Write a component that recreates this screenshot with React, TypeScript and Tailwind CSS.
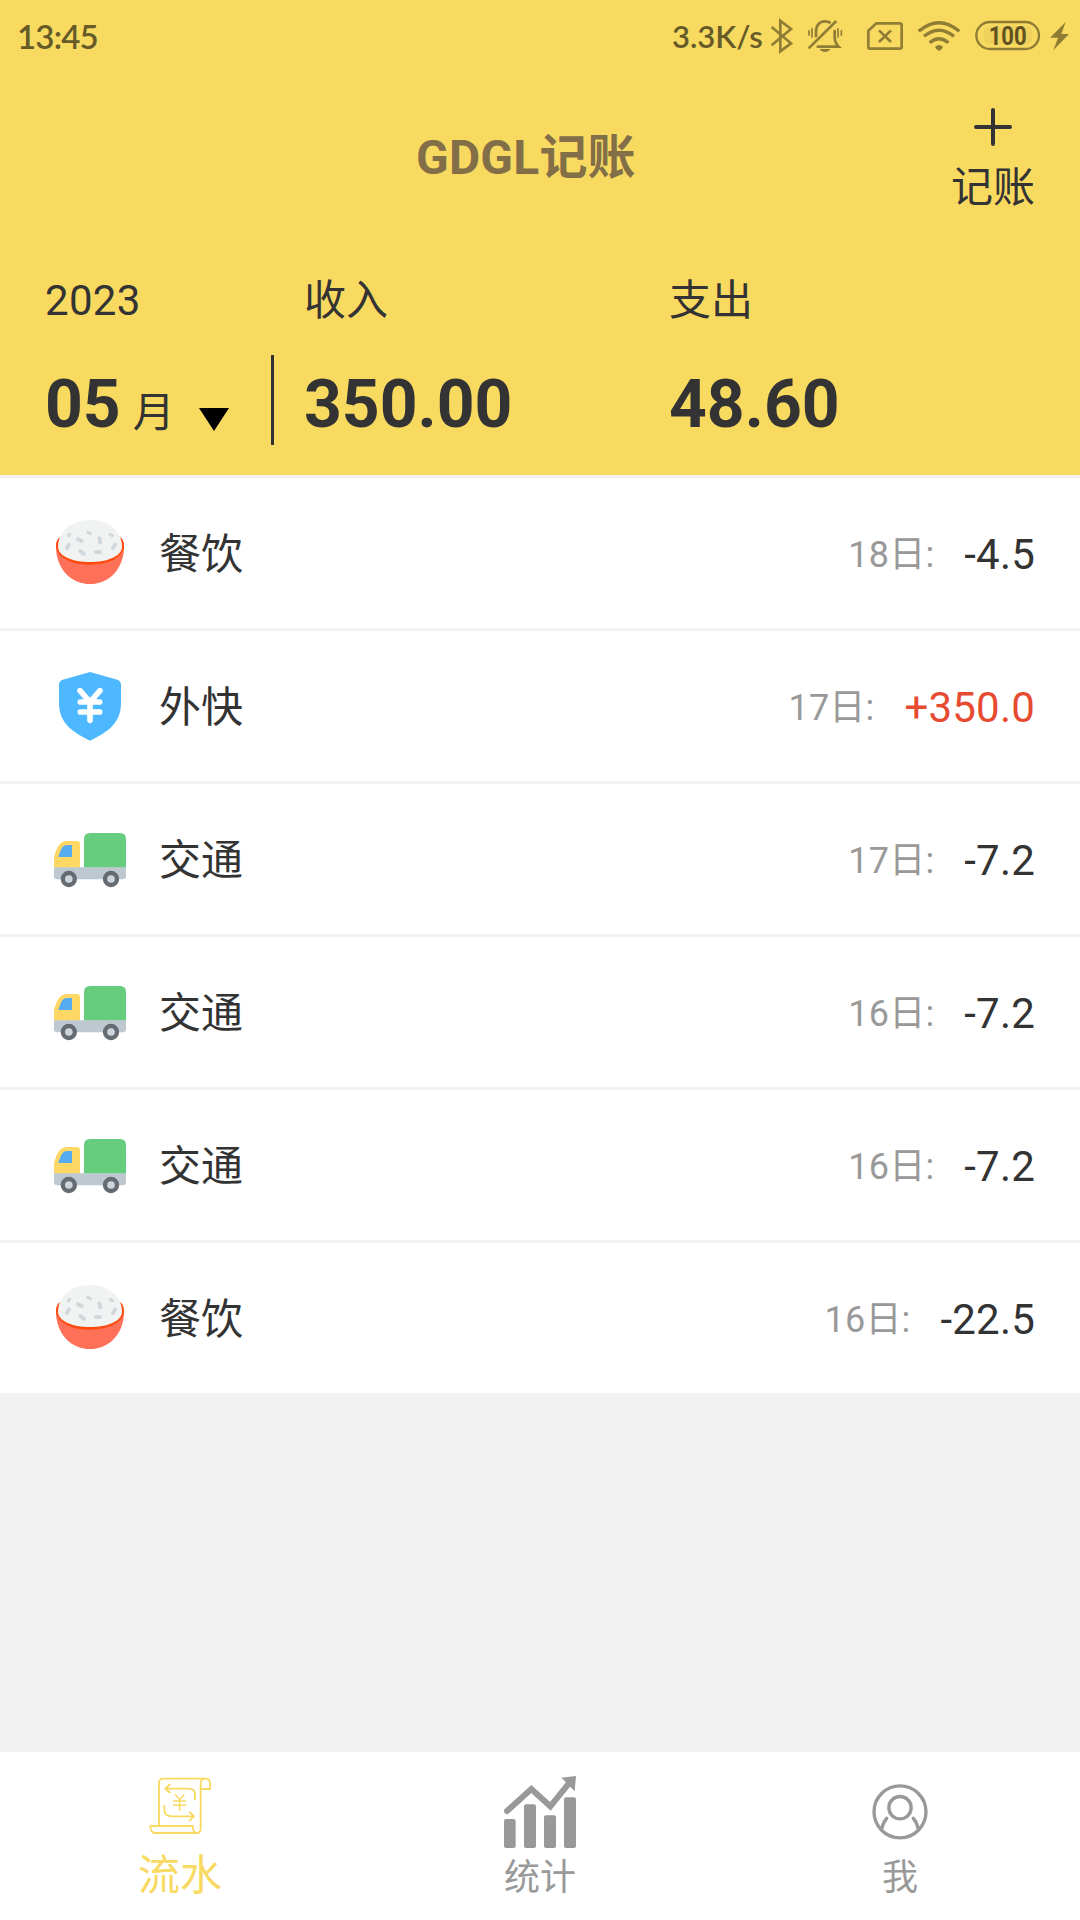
import React from "react";

type Kind = "food" | "bonus" | "traffic";

interface Entry {
  kind: Kind;
  name: string;
  day: string;
  amount: string;
}

const entries: Entry[] = [
  { kind: "food", name: "餐饮", day: "18日:", amount: "-4.5" },
  { kind: "bonus", name: "外快", day: "17日:", amount: "+350.0" },
  { kind: "traffic", name: "交通", day: "17日:", amount: "-7.2" },
  { kind: "traffic", name: "交通", day: "16日:", amount: "-7.2" },
  { kind: "traffic", name: "交通", day: "16日:", amount: "-7.2" },
  { kind: "food", name: "餐饮", day: "16日:", amount: "-22.5" },
];

function RiceIcon() {
  return (
    <svg className="size-[72px]" viewBox="72 51 216 216">
      <path d="M78 140C78 126 82 116 92 110H268C278 116 282 126 282 140C282 205 238 252 180 252C122 252 78 205 78 140Z" fill="#ff7058" />
      <path d="M78 140C78 126 82 116 92 110H268C278 116 282 126 282 142C276 176 232 194 180 194C128 194 84 176 78 140Z" fill="#ff4b10" />
      <path d="M84 140C84 96 124 60 180 60C236 60 276 96 276 140C276 168 232 186 180 186C128 186 84 168 84 140Z" fill="#f1f2f2" />
      <g stroke="#cfd8dd" strokeLinecap="round" fill="none">
        <path d="M144 118L155 123M208 115L211 127M151 153L161 161M198 156H210M117 134L111 144M255 134L249 144" strokeWidth="12" />
        <path d="M115 107L119 103M173 97L181 101M240 103L247 107" strokeWidth="9" />
      </g>
    </svg>
  );
}

function ShieldIcon() {
  return (
    <svg className="size-[72px]" viewBox="72 510 216 216">
      <path d="M180 516L262 539Q273 543 273 555V608C273 668 236 694 180 722C124 694 87 668 87 608V555Q87 543 98 539Z" fill="#4db8ff" />
      <path d="M150 572L180 606L210 572M151 606H209M151 636H209M180 606V661" stroke="#fff" strokeWidth="17" strokeLinecap="round" strokeLinejoin="round" fill="none" />
    </svg>
  );
}

function TruckIcon() {
  return (
    <svg className="size-[72px]" viewBox="72 69 216 216">
      <path d="M162 203V117Q162 99 180 99H270Q288 99 288 117V203Z" fill="#66cd7f" />
      <path d="M72 203V172C78 152 84 123 112 123H140Q150 123 150 133V203Z" fill="#ffd764" />
      <path d="M85 171C91 154 95 135 112 135H126V171Z" fill="#57abf1" />
      <path d="M72 202H288V228Q288 238 278 238H82Q72 238 72 228Z" fill="#bdc8d0" />
      <circle cx="116.500" cy="237" r="18" fill="#cdd6dd" stroke="#656b70" strokeWidth="13" />
      <circle cx="243" cy="237" r="18" fill="#cdd6dd" stroke="#656b70" strokeWidth="13" />
    </svg>
  );
}

const kindIcons: Record<Kind, () => React.JSX.Element> = {
  food: RiceIcon,
  bonus: ShieldIcon,
  traffic: TruckIcon,
};

function FlowIcon() {
  return (
    <svg className="size-[72px]" viewBox="132 108 216 216" fill="none" stroke="#f8da62" strokeWidth="5.500">
      <path d="M177 257V129Q177 116 190 116H316Q330 116 330 130V147H302V131Q302 116 316 116" />
      <path d="M302 147V264Q302 279 291 279Q278 279 278 258H151Q151 279 167 279H291" />
      <path d="M196 146H266Q285 146 285 165V180M211 132L196 146L211 159" />
      <path d="M193 195V207Q193 229 215 229H283M267 215L282 229L267 243" />
      <path d="M225 163L239 179L253 163M219 183H259M219 196H259M239 179V213" strokeWidth="4.500" />
    </svg>
  );
}

function ChartIcon() {
  return (
    <svg className="size-[72px]" viewBox="132 108 216 216" fill="#999">
      <rect x="132" y="237" width="35" height="87" rx="6" />
      <rect x="192" y="193" width="36" height="131" rx="6" />
      <rect x="252" y="226" width="36" height="98" rx="6" />
      <rect x="312" y="172" width="36" height="152" rx="6" />
      <path d="M141 213L214 147L271 199L326 131" fill="none" stroke="#999" strokeWidth="18" strokeLinecap="round" />
      <path d="M304 113L348 108L344 154Z" />
    </svg>
  );
}

function MeIcon() {
  return (
    <svg className="size-[72px]" viewBox="132 108 216 216" fill="none" stroke="#999" strokeWidth="10" strokeLinecap="round">
      <circle cx="240" cy="215.500" r="78" />
      <circle cx="240" cy="203" r="33.500" />
      <path d="M200 235C192 244 188 254 185 267M280 235C288 244 292 254 295 267" />
    </svg>
  );
}

function StatusBar() {
  return (
    <div className="flex h-[72px] items-center pl-[17px] text-[#655a28]">
      <span className="font-['Lato'] text-[33px] font-semibold leading-[40px] tracking-[-0.8px]">13:45</span>
      <span className="ml-auto w-[92px] whitespace-nowrap font-['Lato'] text-[31px] font-semibold leading-[40px]">3.3K/s</span>
      <svg className="h-[72px] w-[316px] shrink-0" viewBox="342 0 948 216" fill="none" stroke="#8f7d35" strokeWidth="8">
        <path d="M365 81L423 130L391 154V62L423 87L365 136" />
        <path d="M498 112V97C498 76 508 64 525 64Q534 64 542 69M554 90V112C554 124 558 132 566 140H500M476 145L559 63" />
        <path d="M477 91V107M486 85V113M564 85V113M574 91V107" strokeWidth="5" />
        <path d="M509 147H541Q537 156 525 156Q513 156 509 147Z" fill="#8f7d35" stroke="none" />
        <path d="M655 92L679 70H750Q755 70 755 75V141Q755 146 750 146H660Q655 146 655 141Z" />
        <path d="M687 91L723 126M723 91L687 126" />
        <path d="M806 94Q867 42 928 94" strokeWidth="10" />
        <path d="M822 109Q867 72 912 109" strokeWidth="10" />
        <path d="M839 128Q867 104 895 128" strokeWidth="10" />
        <path d="M855 140Q867 130 879 140Q878 146 867 153Q856 146 855 140Z" fill="#8f7d35" stroke="none" />
        <rect x="1001" y="79" width="146" height="54" rx="16" fill="#efd15d" stroke="none" />
        <rect x="979" y="66" width="188" height="81" rx="40.500" strokeWidth="7" />
        <path d="M1247 66L1200 113H1224L1210 151L1257 102H1234Z" fill="#8f7d35" stroke="none" />
        <text x="1073" y="135" textAnchor="middle" textLength="114" lengthAdjust="spacingAndGlyphs" fontFamily="Roboto" fontSize="78" fontWeight="700" fill="#5f5220" stroke="none">100</text>
      </svg>
    </div>
  );
}

function Header() {
  return (
    <header className="flex h-[475px] flex-col bg-[#f9da61]">
      <StatusBar />
      <div className="flex h-[168px] items-start pl-[416px] pr-[45px]">
        <h1 className="mt-[51px] text-[48px] font-bold leading-[70px] tracking-[0.2px] text-[#826f48]">GDGL记账</h1>
        <button className="ml-auto mt-[36px] flex flex-col items-center">
          <svg className="size-[38px]" viewBox="0 0 38 38" stroke="#333" strokeWidth="4" strokeLinecap="round">
            <path d="M2 19H36M19 2V36" />
          </svg>
          <span className="mt-[12px] text-[42px] leading-[60px]">记账</span>
        </button>
      </div>
      <div className="flex pl-[45px]">
        <div className="w-[226px]">
          <div className="mt-[31px] text-[42px] leading-[60px] tracking-[0.3px]">2023</div>
          <div className="mt-[29px] flex items-baseline">
            <span className="text-[66px] font-bold leading-[90px]">05</span>
            <span className="ml-[12px] text-[42px] leading-[60px]">月</span>
            <svg className="ml-[24px] h-[23px] w-[30px] translate-y-[4px]" viewBox="0 0 30 23">
              <path d="M0 0H30L15 23Z" fill="#000" />
            </svg>
          </div>
        </div>
        <div className="mt-[115px] h-[90px] w-[3px] bg-[#333]" />
        <div className="ml-[30px] w-[365px]">
          <div className="mt-[31px] text-[42px] leading-[60px]">收入</div>
          <div className="mt-[29px] text-[66px] font-bold leading-[90px]">350.00</div>
        </div>
        <div>
          <div className="mt-[31px] text-[42px] leading-[60px]">支出</div>
          <div className="mt-[29px] text-[66px] font-bold leading-[90px]">48.60</div>
        </div>
      </div>
    </header>
  );
}

function EntryRow({ entry }: { entry: Entry }) {
  const Icon = kindIcons[entry.kind];
  return (
    <li className="flex h-[150px] items-center bg-white pl-[54px] pr-[45px]">
      <Icon />
      <span className="ml-[33px] pt-[4px] text-[42px] leading-[60px]">{entry.name}</span>
      <span className="ml-auto pt-[4px] text-[36px] leading-[54px] tracking-[0.2px] text-[#999]">{entry.day}</span>
      <span className={entry.amount.startsWith("+") ? "ml-[30px] pt-[4px] text-[42px] leading-[60px] tracking-[0.2px] text-[#e64b32]" : "ml-[30px] pt-[4px] text-[42px] leading-[60px] tracking-[0.2px]"}>
        {entry.amount}
      </span>
    </li>
  );
}

export default function App() {
  return (
    <div className="flex h-[1920px] w-[1080px] flex-col overflow-hidden bg-[#f2f2f2] font-['Roboto','Noto_Sans_CJK_SC',sans-serif] text-[#333]">
      <Header />
      <ul className="mt-[3px] flex flex-1 flex-col gap-[3px]">
        {entries.map((entry, i) => (
          <EntryRow key={i} entry={entry} />
        ))}
      </ul>
      <nav className="flex h-[168px] bg-white pt-[24px] text-[#999]">
        <a className="flex flex-1 flex-col items-center">
          <FlowIcon />
          <span className="-mt-[2px] text-[42px] leading-[60px] text-[#f8da62]">流水</span>
        </a>
        <a className="flex flex-1 flex-col items-center">
          <ChartIcon />
          <span className="mt-[3px] text-[36px] leading-[54px]">统计</span>
        </a>
        <a className="flex flex-1 flex-col items-center">
          <MeIcon />
          <span className="mt-[3px] text-[36px] leading-[54px]">我</span>
        </a>
      </nav>
    </div>
  );
}
